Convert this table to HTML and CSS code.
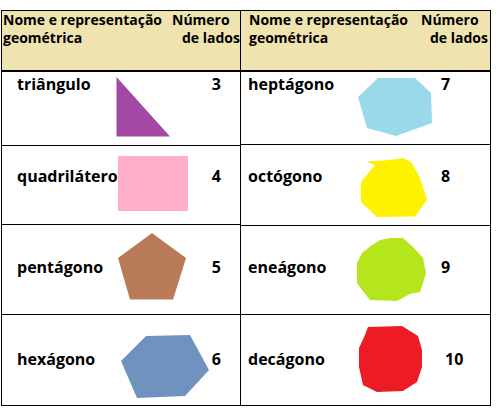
FILE: index.html
```html
<!DOCTYPE html>
<html lang="pt">
<head>
<meta charset="utf-8">
<title>Polígonos</title>
<link rel="stylesheet" href="styles.css">
</head>
<body>
<div class="sheet">
  <div class="tbl tbl-left">
    <div class="hdr">
      <div class="hname">Nome e representação<br>geométrica</div>
      <div class="hnum"><div>Número</div><div class="hnum2">de lados</div></div>
    </div>
    <div class="row l1">
      <div class="name">triângulo</div>
      <svg class="shape" width="98" height="73" viewBox="112 72 98 73"><polygon points="116.5,77 116.5,136.5 170,136.5" fill="#A349A4"/></svg>
      <div class="num">3</div>
    </div>
    <div class="row l2">
      <div class="name">quadrilátero</div>
      <svg class="shape" width="98" height="78" viewBox="112 146 98 78"><rect x="118" y="156" width="70" height="55" fill="#FFAEC9"/></svg>
      <div class="num">4</div>
    </div>
    <div class="row l3">
      <div class="name">pentágono</div>
      <svg class="shape" width="98" height="89" viewBox="112 225 98 89"><polygon points="152,233 186,258 173,299.5 130,299.5 118,258" fill="#B97A57"/></svg>
      <div class="num">5</div>
    </div>
    <div class="row l4">
      <div class="name">hexágono</div>
      <svg class="shape" width="98" height="90" viewBox="112 315 98 90"><polygon points="146,336 168,335.5 190,335 209,370 185,396 137,398 121,361" fill="#7092BE"/></svg>
      <div class="num">6</div>
    </div>
  </div>
  <div class="tbl tbl-right">
    <div class="hdr">
      <div class="hname">Nome e representação<br>geométrica</div>
      <div class="hnum"><div>Número</div><div class="hnum2">de lados</div></div>
    </div>
    <div class="row q1">
      <div class="name">heptágono</div>
      <svg class="shape" width="78" height="72" viewBox="355 72 78 72"><polygon points="378,78 415,78 431,93 432,123 396,136 367,128 358,97" fill="#99D9EA"/></svg>
      <div class="num">7</div>
    </div>
    <div class="row q2">
      <div class="name">octógono</div>
      <svg class="shape" width="78" height="80" viewBox="355 145 78 80"><polygon points="368,161.5 390,160 403,158 412,163 420,178 427,200 415,216.5 377,217 361,202 361,182 375,165 368,162.5" fill="#FFF200"/></svg>
      <div class="num">8</div>
    </div>
    <div class="row q3">
      <div class="name">eneágono</div>
      <svg class="shape" width="78" height="88" viewBox="355 226 78 88"><polygon points="372,245 380,240 390,238 403,238 413,247 423,258 426,273 423,283 420,292 410,294 397,301 370,300 362,290 357,283 357,263 362,253" fill="#B5E61D"/></svg>
      <div class="num">9</div>
    </div>
    <div class="row q4">
      <div class="name">decágono</div>
      <svg class="shape" width="78" height="90" viewBox="355 315 78 90"><polygon points="368,327 402,326 418,336 422,350 422,367 417,382 403,391 377,392 363,385 359,367 359,348 365,335" fill="#ED1C24"/></svg>
      <div class="num num10">10</div>
    </div>
  </div>
</div>
</body>
</html>
```

FILE: styles.css
```css
html, body {
  margin: 0;
  padding: 0;
  background: #ffffff;
}

body {
  font-family: "Open Sans", "Liberation Sans", sans-serif;
  font-weight: 700;
  color: #000000;
}

.sheet {
  display: flex;
  align-items: flex-start;
  padding: 10px 0 0 1px;
}

.tbl {
  border: 1px solid #000000;
  box-sizing: border-box;
  display: flex;
  flex-direction: column;
}

.tbl-left {
  width: 240px;
}

.tbl-right {
  width: 250px;
  border-left: none;
}

.hdr {
  display: flex;
  height: 61px;
  box-sizing: border-box;
  background: #EFE4B0;
  border-bottom: 2px solid #000000;
  font-size: 14px;
  line-height: 18px;
  white-space: nowrap;
}

.tbl-left .hname {
  width: 170px;
  padding-left: 1px;
  box-sizing: border-box;
}

.tbl-right .hname {
  width: 180px;
  padding-left: 8px;
  box-sizing: border-box;
}

.tbl-left .hnum2 {
  padding-left: 10px;
}

.tbl-right .hnum2 {
  padding-left: 9px;
}

.row {
  display: flex;
  align-items: flex-start;
  border-bottom: 1px solid #000000;
  box-sizing: border-box;
  font-size: 16px;
  line-height: 20px;
  white-space: nowrap;
}

.row:last-child {
  border-bottom: none;
}

.shape {
  display: block;
  flex: none;
  overflow: visible;
}

.tbl-left .name {
  width: 110px;
  padding-left: 15px;
  box-sizing: border-box;
  flex: none;
}

.tbl-left .num {
  width: 11px;
  text-align: right;
  flex: none;
}

.tbl-right .name {
  width: 114px;
  padding-left: 7px;
  box-sizing: border-box;
  flex: none;
}

.tbl-right .num {
  margin-left: 8px;
  flex: none;
}

.tbl-right .num10 {
  margin-left: 12px;
}

.l1 { height: 74px; }
.l2 { height: 79px; }
.l3 { height: 90px; }
.l4 { height: 90px; }

.q1 { height: 73px; }
.q2 { height: 81px; }
.q3 { height: 89px; }
.q4 { height: 90px; }

.l1 .name, .l1 .num { padding-top: 2px; }
.l2 .name, .l2 .num { padding-top: 20px; }
.l3 .name, .l3 .num { padding-top: 32px; }
.l4 .name, .l4 .num { padding-top: 34px; }

.q1 .name, .q1 .num { padding-top: 2px; }
.q2 .name, .q2 .num { padding-top: 21px; }
.q3 .name, .q3 .num { padding-top: 31px; }
.q4 .name, .q4 .num { padding-top: 34px; }
```
